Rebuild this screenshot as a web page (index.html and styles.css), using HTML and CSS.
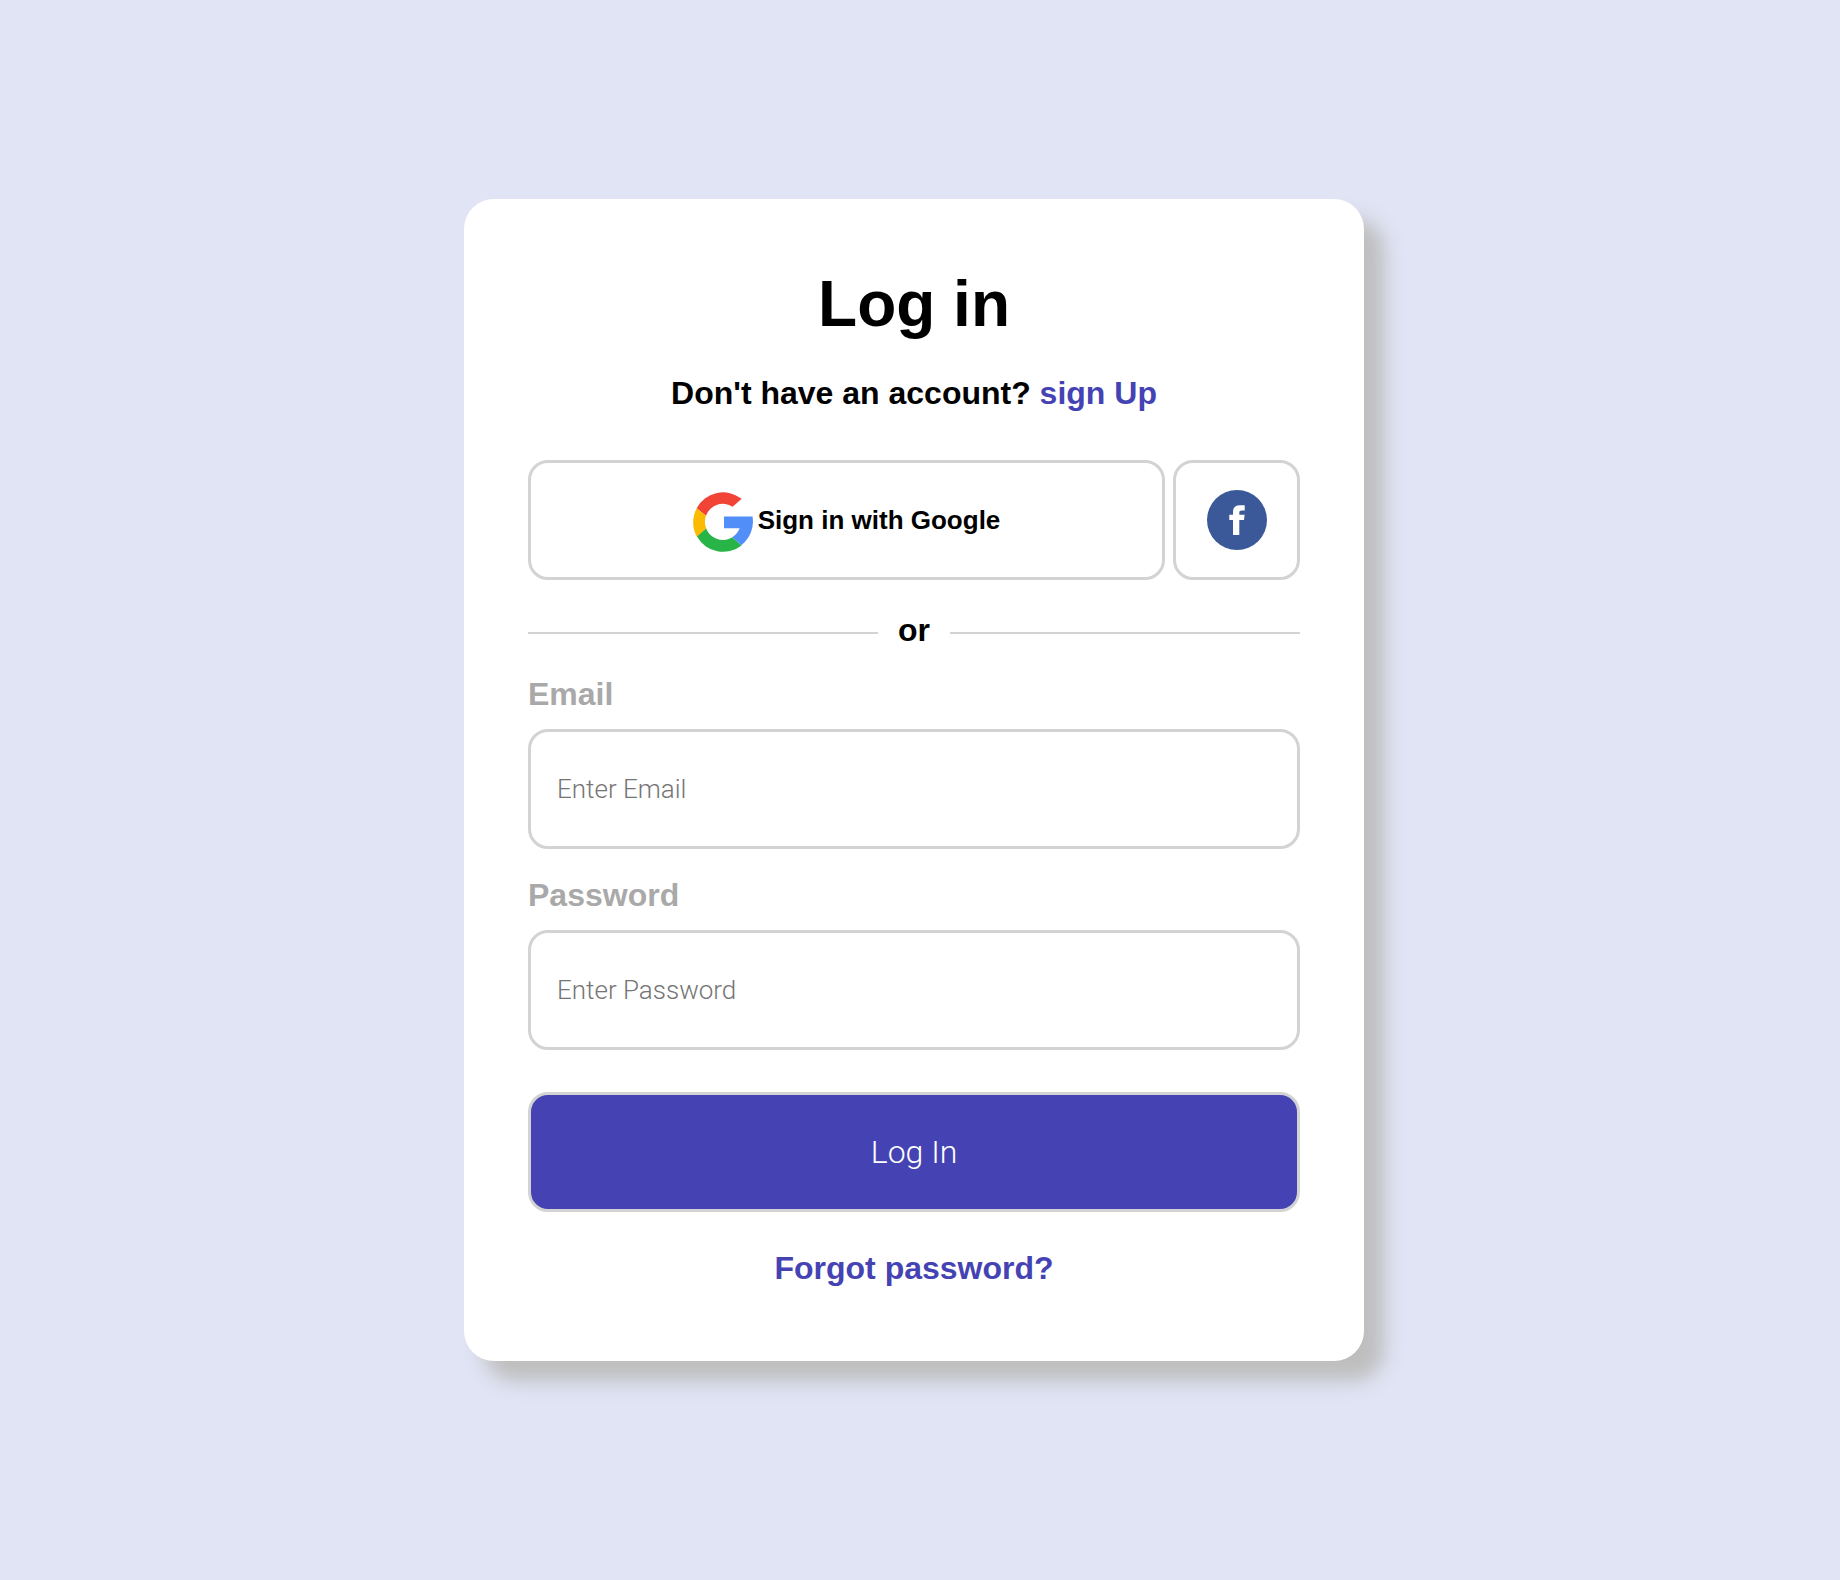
FILE: index.html
```html
<!DOCTYPE html>
<html lang="en">
<head>
  <meta charset="utf-8">
  <meta name="viewport" content="width=device-width, initial-scale=1">
  <title>Log in</title>
  <link rel="stylesheet" href="styles.css">
</head>
<body>
  <main class="card">
    <h1 class="title">Log in</h1>
    <p class="subtitle">Don't have an account? <a class="link" href="#signup">sign Up</a></p>

    <div class="social">
      <button class="box google" type="button">
        <svg class="google-icon" viewBox="0 0 60 60" aria-hidden="true">
          <path fill="#f14336" d="M3.7 16.2A30 30 0 0 1 48.7 6.8L39.6 14.8A17.7 17.7 0 0 0 13 23.7Z"/>
          <path fill="#fbbb00" d="M3.7 16.2A30 30 0 0 0 4 45L13.2 36.4A17.7 17.7 0 0 1 13 23.7Z"/>
          <path fill="#28b446" d="M4 44.6A30 30 0 0 0 48.6 53.5L39.3 45.3A17.7 17.7 0 0 1 13.2 36.4Z"/>
          <path fill="#518ef8" d="M31 24.4H59.5A30 30 0 0 1 48.4 53.2L39.3 45.3Q44.6 41.8 46.6 36.2H31Z"/>
        </svg>
        <span>Sign in with Google</span>
      </button>
      <button class="box facebook" type="button" aria-label="Sign in with Facebook">
        <svg class="icon" viewBox="0 0 60 60" aria-hidden="true">
          <circle cx="30" cy="30" r="30" fill="#3b5998"/>
          <path fill="#fff" d="M37.7 15.2V20.6H34.6C33 20.6 32.3 21.3 32.3 22.8V24.8H37.6L37 30H32.3V45H26V30H22.3V24.8H26V22C26 17.5 28.2 15.2 33 15.2Z"/>
        </svg>
      </button>
    </div>

    <div class="divider"><span>or</span></div>

    <form class="form">
      <label class="label" for="email">Email</label>
      <input class="box input" id="email" type="email" placeholder="Enter Email">
      <label class="label" for="password">Password</label>
      <input class="box input" id="password" type="password" placeholder="Enter Password">
      <button class="box submit" type="submit">Log In</button>
    </form>

    <p class="forgot"><a class="link" href="#forgot">Forgot password?</a></p>
  </main>
</body>
</html>
```
FILE: styles.css
```css
* {
  box-sizing: border-box;
}

body {
  display: flex;
  align-items: center;
  justify-content: center;
  min-height: 100vh;
  margin: 0;
  padding: 0 12px 20px 0;
  background: #e1e4f5;
  color: #000;
  font: bold 32px/40px "Liberation Sans", Arial, sans-serif;
}

.card {
  width: 100%;
  max-width: 900px;
  padding: 64px 64px 73px;
  border-radius: 30px;
  background: #fff;
  box-shadow: 20px 20px 20px #bebebe;
}

.title,
.subtitle,
.forgot {
  margin: 0;
  text-align: center;
}

.title {
  margin-bottom: 28px;
  font-size: 64px;
  line-height: 82px;
}

.link {
  color: #4543b3;
  text-decoration: none;
}

.box {
  height: 120px;
  border: 3px solid #d3d3d3;
  border-radius: 20px;
  background: #fff;
  color: inherit;
  font: inherit;
}

.social {
  display: flex;
  gap: 8px;
  margin: 47px 0 30px;
}

.google,
.facebook {
  display: flex;
  align-items: center;
  justify-content: center;
  padding: 0;
}

.google {
  flex: 1;
  gap: 5px;
  font-size: 26px;
}

.facebook {
  width: 127px;
}

.icon,
.google-icon {
  width: 60px;
  height: 60px;
}

.google-icon {
  margin-top: 4px;
}

.divider {
  display: flex;
  align-items: center;
  gap: 20px;
  margin-bottom: 24px;
}

.divider::before,
.divider::after {
  content: "";
  flex: 1;
  height: 2px;
  margin-top: 6px;
  background: #d3d3d3;
}

.form {
  display: flex;
  flex-direction: column;
}

.label {
  margin-bottom: 15px;
  color: #a9a9a9;
}

.input {
  width: 100%;
  margin-bottom: 26px;
  padding: 0 26px;
  font: 300 26px/32px Roboto, "Liberation Sans", sans-serif;
}

.input::placeholder {
  color: #757575;
  opacity: 1;
}

.submit {
  margin: 16px 0 36px;
  background: #4543b3;
  color: #fff;
  font: 300 32px/40px Roboto, "Liberation Sans", sans-serif;
}
```
